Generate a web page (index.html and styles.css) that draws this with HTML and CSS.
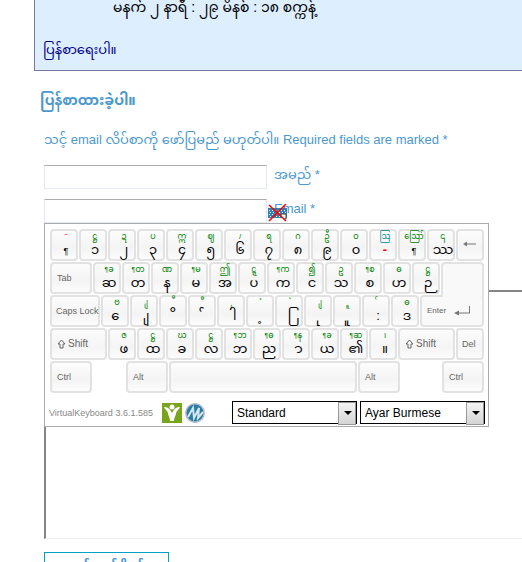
FILE: index.html
```html
<!DOCTYPE html>
<html lang="my">
<head>
<meta charset="utf-8">
<title>ပြန်စာရေးပါ။</title>
<link rel="stylesheet" href="styles.css">
</head>
<body>
<main>
  <section class="notice">
    <p class="clock">မနက် ၂ နာရီ : ၂၉ မိနစ် : ၁၈ စက္ကန့်</p>
    <a class="reply" href="#respond">ပြန်စာရေးပါ။</a>
  </section>
  <form class="respond" id="respond">
    <h3>ပြန်စာထားခဲ့ပါ။</h3>
    <p class="note">သင့် email လိပ်စာကို ဖော်ပြမည် မဟုတ်ပါ။ Required fields are marked *</p>
    <div class="field"><input id="author" type="text"><label for="author">အမည် *</label></div>
    <div class="field mail">
      <input id="email" type="text"><label for="email">Email *</label>
      <svg class="toggle" viewBox="0 0 20 18" aria-hidden="true"><path fill="#2e82b8" d="M0 4h19v10H0z"/><path stroke="#fff" stroke-dasharray="1 2" d="M1 6.500h17M2 8.500h16M1 10.500h17M2 12.500h12"/><path fill="#fff" stroke="#444" d="M13 10h5v5h-2l-3-3z"/><path stroke="#f00" stroke-width="1.500" d="M1 1l17 16M18 0L1 17"/></svg>
      <div class="keyboard">
        <div class="keys" id="keys"></div>
        <div class="bar">
          <span class="version">VirtualKeyboard 3.6.1.585</span>
          <svg class="logo" viewBox="0 0 20 20" aria-hidden="true"><path fill="#78a51c" d="M0 0h20v20H0z"/><circle cx="10" cy="4" r="2.500" fill="#fff"/><path fill="#fff" d="M2 4c4 0 6 2 8 6 2-4 4-6 8-6-1 3-3 3-4 6 0 3-2 4-2 8H8c0-4-2-5-2-8-1-3-3-3-4-6z"/></svg>
          <svg class="logo" viewBox="0 0 20 20" aria-hidden="true"><circle cx="10" cy="10" r="9.200" fill="#287da9" stroke="#b4bcc2" stroke-width="1.500"/><path fill="none" stroke="#d7e7ee" stroke-width="2" d="M3 14L8 5l1 10 5-10-1 10 5-6"/></svg>
          <span class="pick mode"><select aria-label="Mode"><option>Standard</option></select></span>
          <span class="pick"><select aria-label="Layout"><option>Ayar Burmese</option></select></span>
        </div>
      </div>
    </div>
    <textarea aria-label="Comment"></textarea>
    <button class="submit" type="button">မှတ်ချက်ပို့ရန်</button>
  </form>
</main>
<script src="keys.js"></script>
</body>
</html>
```
FILE: keys.js
```js
const arrow = '<svg class="back" viewBox="0 0 14 8"><path fill="#777" d="M0 4l4-2.500v2h9v1H4v2z"/></svg>';
const enter = '<svg class="return" viewBox="0 0 18 12"><path fill="#777" d="M0 8l5-2.500v2h10V1h1v7.500H5v2z"/></svg>';
const shift = '<svg class="up" viewBox="0 0 9 10"><path fill="none" stroke="#666" d="M4.500 1L8 5H6v4H3V5H1z"/></svg>Shift';

// Each letter key is "shifted|base"; objects are the wide keys and gaps.
const rows = [
  ['¨|¶', 'ဋ္ဌ|၁', 'ဍ|၂', 'ပ|၃', 'ဣ|၄', 'ဈ|၅', '/|၆', 'ရ|၇', 'ဂ|၈', 'ဦ|၉', 'ဝ|၀', 'ဩ|-', 'ဪ|¶', '၎|ဿ', { c: 'backspace', t: arrow }],
  [{ c: 'tab', t: 'Tab' }, '¶ခ|ဆ', '¶တ|တ', 'ဏ|န', '¶မ|မ', 'ဤ|အ', 'ဋ္ဋ|ပ', '¶က|က', '၍|င', 'ဥ|သ', '¶စ|စ', 'ဓ|ဟ', 'ဋ္ဌ|ဉ', { c: 'enter-top', t: '' }],
  [{ c: 'caps', t: 'Caps Lock' }, 'ဗ|ေ', 'ျ|ျ', 'ီ|ိ', 'ဳ|်', 'ှ|ါ', 'ံ|့', 'ဲ|ြ', 'ျ|ု', 'ူ|ူ', '်|:', 'ဓ|ဒ', { c: 'enter', t: 'Enter' + enter }],
  [{ c: 'shift', t: shift }, 'ဇ|ဖ', 'ဋ္ဌ|ထ', 'ဃ|ခ', 'ဋ္ဌ|လ', '¶ဘ|ဘ', '¶ဓ|ည', '¶န|ာ', '¶ခ|ယ', '¶ဆ|၏', '၊|။', { c: 'shift', t: shift }, { c: 'del', t: 'Del' }],
  [{ c: 'mod', t: 'Ctrl' }, { c: 'gap' }, { c: 'mod', t: 'Alt' }, { c: 'space', t: '' }, { c: 'mod', t: 'Alt' }, { c: 'gap end' }, { c: 'mod', t: 'Ctrl' }]
];

// A combining mark stands on a no-break space so that no dotted circle is drawn.
const glyph = s => (/^[\u102b-\u103e]/.test(s) ? '\u00a0' + s : s).replace('¶', '<small>¶</small>');

document.getElementById('keys').innerHTML = rows.map(row => '<div class="row">' + row.map(k => {
  if (typeof k === 'string') {
    const [up, base] = k.split('|');
    const tone = up === '¨' ? ' red' : base === '-' ? ' minus' : '';
    return `<button type="button" class="key letter${tone}"><sup>${glyph(up)}</sup><span>${glyph(base)}</span></button>`;
  }
  if (k.c.startsWith('gap')) return `<span class="${k.c}"></span>`;
  return `<button type="button" class="key ${k.c}">${k.t}</button>`;
}).join('') + '</div>').join('');
```
FILE: styles.css
```css
* { box-sizing: border-box; }
body { margin: 0; background: #fff; color: #4b98cf; font: 13px/20px "Liberation Sans", "Noto Sans Myanmar", Padauk, sans-serif; overflow: hidden; }
.notice { height: 71px; margin-left: 34px; padding: 0 8px; background: #def; border: solid #7878a0; border-width: 0 0 1px 1px; color: #000; }
.clock { margin: 0; padding: 0 0 26px 70px; font-size: 14px; line-height: 14px; }
.reply { color: #00008b; font-size: 13px; text-decoration: none; }
.respond { padding: 19px 0 0 44px; }
h3 { margin: 0 0 20px -4px; font-size: 14px; }
.note { margin: 0 0 15px; white-space: nowrap; }
.field { display: flex; gap: 7px; height: 24px; margin-bottom: 10px; }
.field input { width: 223px; height: 24px; border: 1px solid #e3e9ef; border-top-color: #ababab; }
.mail { position: relative; margin-bottom: 67px; }
.toggle { position: absolute; left: 224px; top: 5px; width: 20px; height: 18px; }
.keyboard { position: absolute; left: 0; top: 24px; padding: 5px 3px 2px 5px; background: #fff; border: 1px solid #aaa; }
.row { display: flex; height: 33px; }
.key { flex: none; width: 28px; height: 32px; margin: 0 1px 0 0; padding: 0; border: 2px solid #e2e2e2; border-radius: 4px; background: linear-gradient(#fcfcfc, #f4f4f4 60%, #fcfcfc); color: #666; font: 9px/28px "Liberation Sans", sans-serif; text-align: left; white-space: nowrap; }
.letter { display: flex; flex-direction: column; align-items: center; padding-left: 4px; color: #000; font-family: "Liberation Sans", "Noto Sans Myanmar", Padauk, sans-serif; }
.letter sup { height: 11px; color: #008000; font-size: 8px; line-height: 11px; }
.letter span { font-size: 13px; line-height: 16px; }
.letter sup small { font-size: 7px; }
.letter span small { font-size: 9px; }
.letter.red sup, .letter.minus span { color: #f00; font-weight: bold; }
.letter.minus sup { color: #088; }
.tab, .mod { width: 42px; padding-left: 5px; }
.caps { width: 50px; padding-left: 4px; }
.shift { width: 57px; padding-left: 5px; font-size: 10px; }
.del { padding-left: 4px; }
.backspace { padding-left: 5px; }
.enter-top { position: relative; z-index: 1; width: 43px; height: 35px; background: #f9f9f9; border-bottom: 0; border-radius: 4px 4px 0 0; }
.enter { width: 64px; padding-left: 5px; background: #f9f9f9; font-size: 8px; }
.gap { width: 33px; }
.gap.end { width: 41px; }
.space { width: 188px; }
.back { width: 14px; height: 8px; }
.return { width: 18px; height: 12px; margin-left: 8px; vertical-align: middle; }
.up { width: 9px; height: 10px; margin-right: 2px; vertical-align: middle; }
.bar { display: flex; align-items: center; gap: 3px; padding-top: 7px; }
.version { width: 110px; margin-left: -1px; color: #888; font: 9px/20px "Liberation Sans", sans-serif; white-space: nowrap; }
.logo { flex: none; width: 20px; height: 20px; }
.pick { position: relative; flex: none; }
.pick::before { content: ""; position: absolute; right: 1px; top: 1px; width: 16px; height: 21px; border: 1px solid #999; background: linear-gradient(#f4f4f4, #d4d4d4); pointer-events: none; }
.pick::after { content: ""; position: absolute; right: 5px; top: 10px; border: 4px solid transparent; border-top-color: #000; border-bottom: 0; pointer-events: none; }
.pick select { display: block; appearance: none; width: 125px; height: 23px; margin: 0; padding: 0 4px; border: 1px solid #000; border-radius: 0; background: #fff; color: #000; font: 12px "Liberation Sans", sans-serif; }
.mode { margin-left: auto; }
textarea { display: block; width: 100%; height: 249px; border: solid #858585; border-width: 2px 0 0 2px; border-bottom: 1px solid #eee; resize: none; }
.submit { height: 30px; width: 125px; margin-top: 13px; padding: 0; border: 1px solid #00a0c8; background: #fff; color: #4b98cf; font: bold 13px/28px "Liberation Sans", "Noto Sans Myanmar", Padauk, sans-serif; }
```
